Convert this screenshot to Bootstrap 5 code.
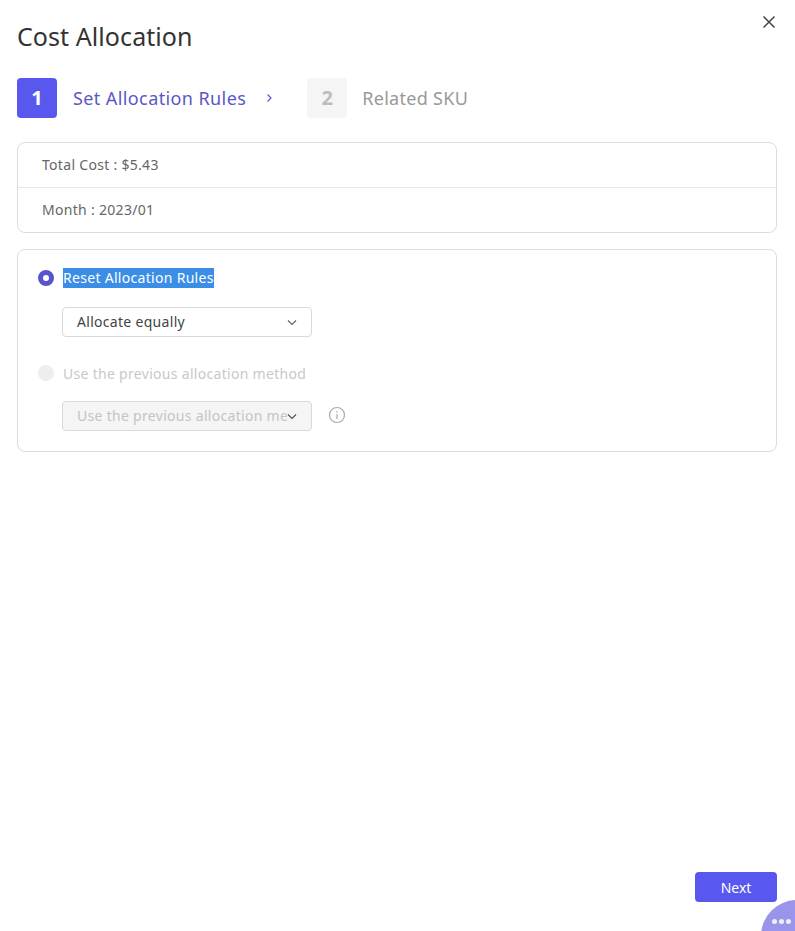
<!DOCTYPE html>
<html lang="en">
<head>
<meta charset="utf-8">
<title>Cost Allocation</title>
<link rel="stylesheet" href="https://cdn.jsdelivr.net/npm/bootstrap@5.3.0/dist/css/bootstrap.min.css">
<style>
html,body{height:100%;}
body{font-family:"Noto Sans","Open Sans",sans-serif;color:#333;background:#fff;overflow:hidden;}
.shell{height:931px;padding:19px 18px 29px 17px;position:relative;overflow:hidden;}
.ttl{font-size:25px;line-height:34px;font-weight:400;color:#333;margin:0 0 25px;letter-spacing:.07px;}
.close-x{position:absolute;top:14px;right:18px;width:16px;height:16px;}
.step-box{width:40px;height:40px;border-radius:4px;font-size:20px;font-weight:700;}
.step-on{background:#5858ee;color:#fff;}
.step-off{background:#f5f5f5;color:#bdbdbd;}
.step-on-t{font-size:18px;color:#5a58c4;margin-left:16px;letter-spacing:.4px;}
.step-off-t{font-size:18px;color:#999;margin-left:15px;letter-spacing:.3px;}
.chev{margin:0 34px 0 20px;}
.steps{margin-bottom:24px;}
.info-box{border:1px solid #dcdcdc;border-radius:8px;font-size:14px;color:#666;letter-spacing:.3px;}
.info-row{height:44px;padding:0 0 2px 24px;}
.info-row+.info-row{border-top:1px solid #e8e8e8;height:45px;}
.rule-box{border:1px solid #dcdcdc;border-radius:8px;margin-top:16px;height:203px;padding:18px 20px;font-size:14px;letter-spacing:.3px;}
.dot{width:16px;height:16px;border-radius:50%;flex:none;margin-right:9px;}
.dot-on{background:#fff;border:5px solid #5754cf;}
.dot-off{background:#eee;}
.sel-text{background:#3a8ee6;color:#fff;line-height:20px;}
.off-text{color:#c8c8c8;}
.fake-sel{width:250px;height:30px;border:1px solid #d9d9d9;border-radius:4px;margin-left:24px;padding:0 24px 2px 14px;position:relative;white-space:nowrap;}
.fake-sel svg{position:absolute;right:14px;top:11px;}
.sel-label{flex:1;min-width:0;overflow:hidden;}
.fake-on{color:#444;margin-top:19px;}
.fake-off{background:#f5f5f5;color:#c4c4c4;}
.line2{margin-top:26px;height:20px;}
.line1{height:20px;}
.line3{margin-top:18px;}
.inf{margin:0 0 2px 16px;}
.next-btn{background:#5858ee;border:0;color:#fff;width:82px;height:30px;font-size:14px;padding:0;border-radius:4px;display:block;}
.next-btn:hover{background:#5858ee;color:#fff;}
.foot{position:absolute;right:18px;bottom:29px;}
.helper{position:absolute;right:-56px;bottom:-70px;width:72px;height:72px;border-radius:50%;background:#9a94ea;}
.helper i{position:absolute;top:19px;width:5px;height:5px;border-radius:50%;background:#fff;opacity:.85;}
.d1{left:11px;}
.d2{left:18px;}
.d3{left:25px;}
</style>
</head>
<body>
<div class="shell">
  <svg class="close-x" viewBox="0 0 16 16" fill="none" stroke="#444" stroke-width="1.5"><path d="M2.5 2.5l11 11M13.5 2.5l-11 11"/></svg>
  <h1 class="ttl">Cost Allocation</h1>
  <div class="d-flex align-items-center steps">
    <div class="step-box step-on d-flex align-items-center justify-content-center">1</div>
    <span class="step-on-t">Set Allocation Rules</span>
    <svg class="chev" width="7" height="10" viewBox="0 0 7 10" fill="none" stroke="#5a58c4" stroke-width="1.2"><path d="M1.5 1.5L5 5 1.5 8.500"/></svg>
    <div class="step-box step-off d-flex align-items-center justify-content-center">2</div>
    <span class="step-off-t">Related SKU</span>
  </div>
  <div class="info-box">
    <div class="info-row d-flex align-items-center">Total Cost : $5.43</div>
    <div class="info-row d-flex align-items-center">Month : 2023/01</div>
  </div>
  <div class="rule-box">
    <div class="d-flex align-items-center line1"><span class="dot dot-on"></span><span class="sel-text">Reset Allocation Rules</span></div>
    <div class="fake-sel fake-on d-flex align-items-center"><span class="sel-label">Allocate equally</span>
      <svg width="10" height="7" viewBox="0 0 10 7" fill="none" stroke="#666" stroke-width="1.200"><path d="M1 1.500l4 4 4-4"/></svg>
    </div>
    <div class="d-flex align-items-center line2"><span class="dot dot-off"></span><span class="off-text">Use the previous allocation method</span></div>
    <div class="d-flex align-items-center line3">
      <div class="fake-sel fake-off d-flex align-items-center"><span class="sel-label">Use the previous allocation method</span>
        <svg width="10" height="7" viewBox="0 0 10 7" fill="none" stroke="#555" stroke-width="1.200"><path d="M1 1.500l4 4 4-4"/></svg>
      </div>
      <svg class="inf" width="18" height="18" viewBox="0 0 18 18" fill="none" stroke="#aaa" stroke-width="1.200"><circle cx="9" cy="9" r="7.500"/><path d="M9 8v5M9 5v1.500"/></svg>
    </div>
  </div>
  <div class="foot">
    <button type="button" class="btn next-btn">Next</button>
    <div class="helper"><i class="d1"></i><i class="d2"></i><i class="d3"></i></div>
  </div>
</div>
<script src="https://cdn.jsdelivr.net/npm/bootstrap@5.3.0/dist/js/bootstrap.bundle.min.js"></script>
</body>
</html>
